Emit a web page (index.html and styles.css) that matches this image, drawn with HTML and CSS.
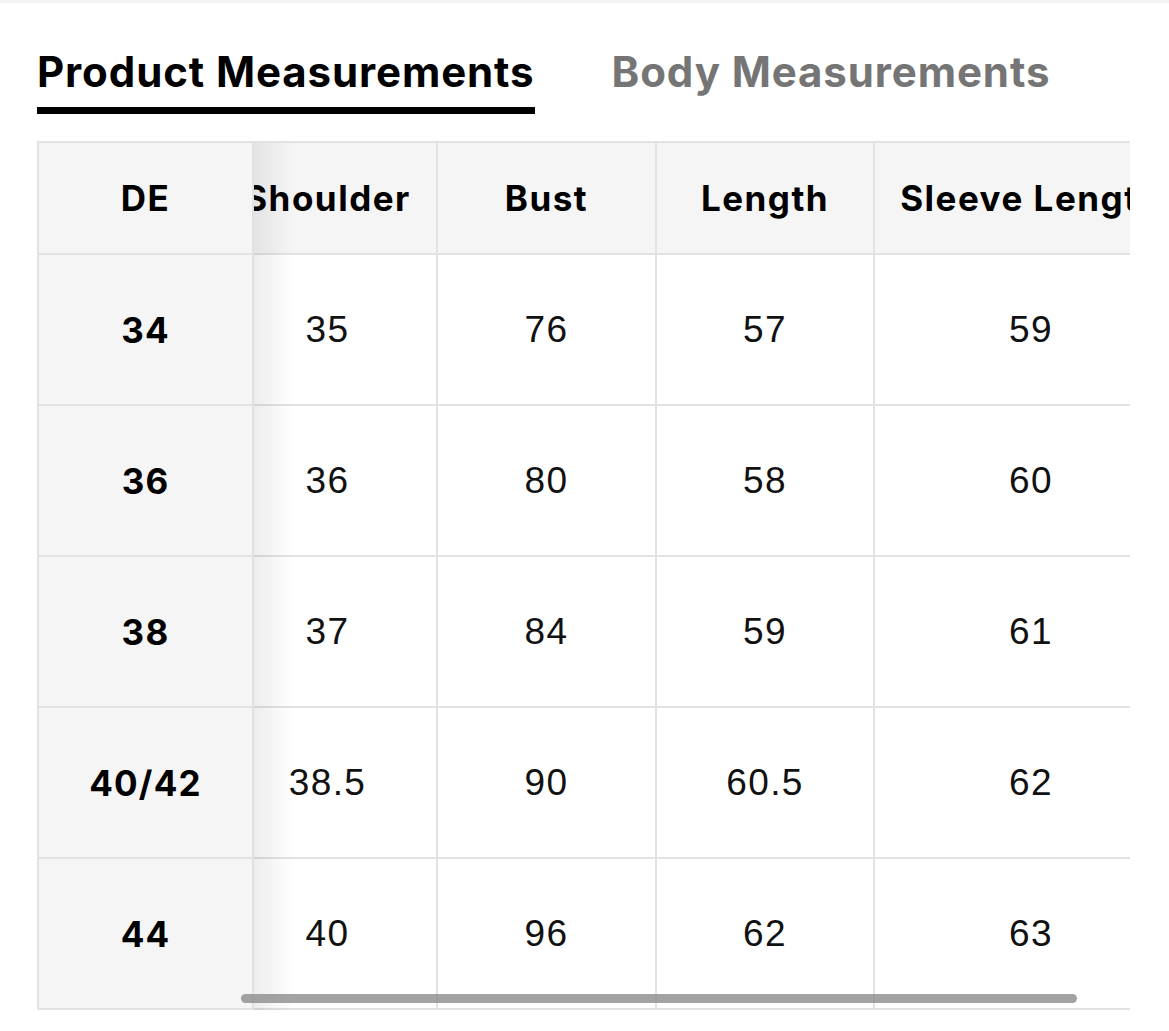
FILE: index.html
```html
<!DOCTYPE html>
<html>
<head>
<meta charset="utf-8">
<link rel="stylesheet" href="styles.css">
</head>
<body>
<div class="topbar"></div>
<div class="tabs">
  <div class="tab active">Product Measurements</div>
  <div class="tab">Body Measurements</div>
</div>
<div class="table-wrap">
  <div class="fixed-col">
    <div class="cell head">DE</div>
    <div class="cell size">34</div>
    <div class="cell size">36</div>
    <div class="cell size">38</div>
    <div class="cell size">40/42</div>
    <div class="cell size">44</div>
  </div>
  <div class="scroller">
    <div class="grid">
      <div class="cell head">Shoulder</div>
      <div class="cell head">Bust</div>
      <div class="cell head">Length</div>
      <div class="cell head">Sleeve Length</div>

      <div class="cell val">35</div>
      <div class="cell val">76</div>
      <div class="cell val">57</div>
      <div class="cell val">59</div>

      <div class="cell val">36</div>
      <div class="cell val">80</div>
      <div class="cell val">58</div>
      <div class="cell val">60</div>

      <div class="cell val">37</div>
      <div class="cell val">84</div>
      <div class="cell val">59</div>
      <div class="cell val">61</div>

      <div class="cell val">38.5</div>
      <div class="cell val">90</div>
      <div class="cell val">60.5</div>
      <div class="cell val">62</div>

      <div class="cell val">40</div>
      <div class="cell val">96</div>
      <div class="cell val">62</div>
      <div class="cell val">63</div>
    </div>
    <div class="shade"></div>
  </div>
  <div class="scrollbar"></div>
</div>
</body>
</html>
```

FILE: styles.css
```css
html, body {
  margin: 0;
  padding: 0;
  background: #ffffff;
}

body {
  font-family: Inter, Roboto, "Liberation Sans", Arial, sans-serif;
  color: #000;
}

.topbar {
  height: 3px;
  background: #f3f3f3;
}

.tabs {
  display: flex;
  gap: 77px;
  padding: 44px 0 0 37px;
}

.tab {
  font-family: Inter, Roboto, sans-serif;
  font-weight: 700;
  font-size: 42px;
  line-height: 50px;
  letter-spacing: 0.9px;
  color: #757575;
  padding-bottom: 10px;
  border-bottom: 7px solid transparent;
}

.tab.active {
  color: #000;
  border-bottom-color: #000;
}

.table-wrap {
  position: relative;
  display: flex;
  margin: 27px 0 0 37px;
  width: 1093px;
  border-top: 2px solid #e2e2e2;
  border-left: 2px solid #e2e2e2;
  box-sizing: border-box;
}

.fixed-col {
  display: grid;
  grid-template-rows: 112px repeat(5, 151px);
  width: 215px;
  flex: none;
  background: #f5f5f5;
}

.scroller {
  position: relative;
  flex: 1;
  overflow: hidden;
}

.grid {
  display: grid;
  grid-template-columns: 219px 219px 218px 314px;
  grid-template-rows: 112px repeat(5, 151px);
  margin-left: -35px;
  width: max-content;
}

.cell {
  display: flex;
  align-items: center;
  justify-content: center;
  box-sizing: border-box;
  border-right: 2px solid #e2e2e2;
  border-bottom: 2px solid #e2e2e2;
  white-space: nowrap;
}

.head {
  background: #f5f5f5;
  font-family: Inter, Roboto, sans-serif;
  font-weight: 700;
  font-size: 35px;
  letter-spacing: 1.5px;
}

.size {
  font-family: Inter, Roboto, sans-serif;
  font-weight: 700;
  font-size: 35px;
  letter-spacing: 1.2px;
}

.val {
  background: #fff;
  font-family: "Liberation Sans", Arial, sans-serif;
  font-size: 37px;
  letter-spacing: 1.4px;
  color: #111;
}

.shade {
  position: absolute;
  top: 0;
  bottom: 0;
  left: 0;
  width: 40px;
  background: linear-gradient(to right, rgba(0, 0, 0, 0.07), rgba(0, 0, 0, 0));
  pointer-events: none;
}

.scrollbar {
  position: absolute;
  left: 202px;
  width: 836px;
  bottom: 7px;
  height: 9px;
  border-radius: 5px;
  background: rgba(140, 140, 140, 0.8);
}
```
